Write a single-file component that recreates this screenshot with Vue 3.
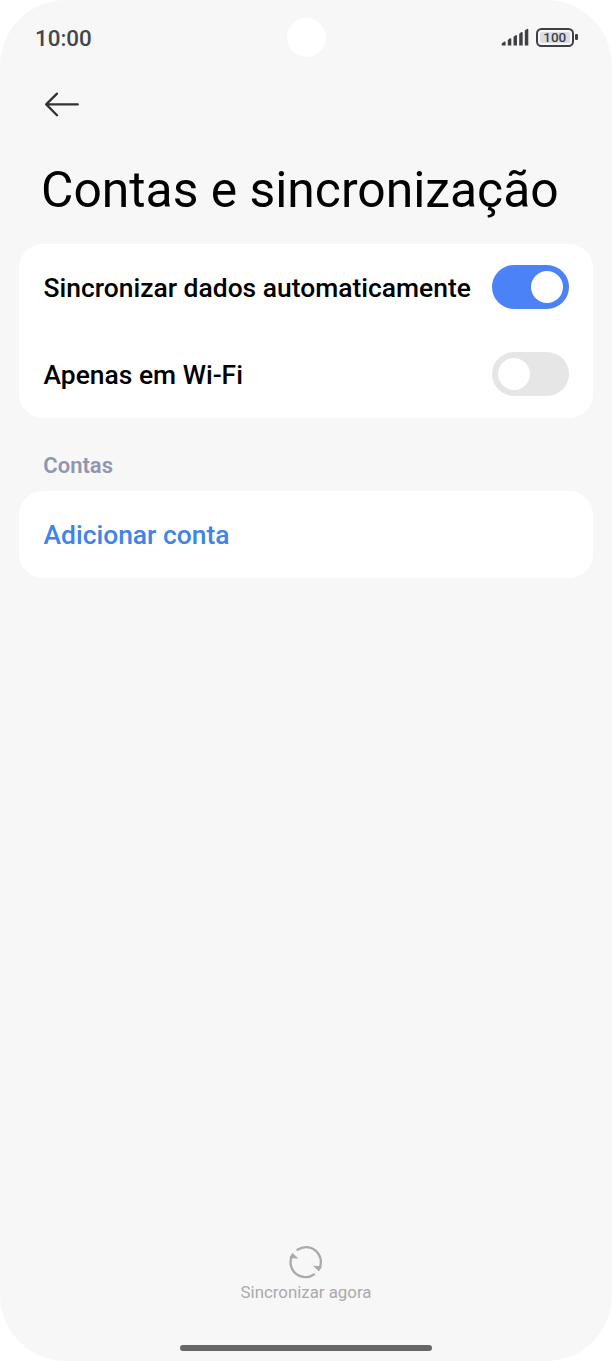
<script setup>
import { ref } from 'vue'

const settings = ref([
  { id: 'auto', label: 'Sincronizar dados automaticamente', on: true },
  { id: 'wifi', label: 'Apenas em Wi-Fi', on: false },
])
</script>

<template>
  <main class="screen">
    <header class="status">
      <span class="time">10:00</span>
      <span class="camera"></span>
      <span class="indicators">
        <svg class="signal" width="28" height="20" viewBox="0 0 28 20">
          <path d="M0.7 18.6V16.6L3.4 14.5Q4.6 14.2 4.6 15.4V18.6ZM6.8 18.6V13L9 11.3Q10.3 10.9 10.3 12.1V18.6ZM12.5 18.6V9.8L14.7 8.2Q16 7.8 16 9V18.6ZM18.2 18.6V6.7L20.4 5.1Q21.7 4.7 21.7 5.9V18.6ZM23.8 18.6V3.5L26 1.9Q27.3 1.5 27.3 2.7V18.6Z" />
        </svg>
        <span class="battery"><span class="level">100</span></span>
        <span class="terminal"></span>
      </span>
    </header>

    <nav class="toolbar">
      <svg width="36" height="26" viewBox="0 0 36 26">
        <path d="M13 2.6L2.2 13.4L13 24.2M2.2 13.4H33.8" />
      </svg>
    </nav>

    <h1>Contas e sincronização</h1>

    <section class="card">
      <div v-for="item in settings" :key="item.id" class="row">
        <span class="label">{{ item.label }}</span>
        <button
          class="switch"
          :class="{ on: item.on }"
          role="switch"
          :aria-checked="item.on"
          :aria-label="item.label"
          @click="item.on = !item.on"
        ><span class="thumb"></span></button>
      </div>
    </section>

    <h2>Contas</h2>
    <section class="card">
      <div class="row add"><span class="label">Adicionar conta</span></div>
    </section>

    <footer class="footer">
      <svg width="34" height="34" viewBox="0 0 34 34">
        <path class="arc" d="M8.5 4.8A14.8 14.8 0 0 1 30.7 22.6M24.9 29.5A14.8 14.8 0 0 1 2.7 11.7" />
        <path class="tip" d="M24.9 21.2L32.4 21.8L29.9 25.8ZM8.5 13.1L1 12.5L3.5 8.5Z" />
      </svg>
      <span class="sync">Sincronizar agora</span>
    </footer>
    <div class="home"></div>
  </main>
</template>

<style>
body {
  background: #fff;
}
</style>

<style scoped>
.screen {
  box-sizing: border-box;
  width: 612px;
  height: 1361px;
  display: flex;
  flex-direction: column;
  background: #f7f7f7;
  border-radius: 66px;
  overflow: hidden;
  font-family: Roboto, sans-serif;
  color: #000;
}
.status {
  height: 74px;
  flex: none;
  display: grid;
  grid-template-columns: 1fr 39px 1fr;
  align-items: center;
  padding: 0 34.5px 0 35px;
  box-sizing: border-box;
}
.time {
  font-size: 22.4px;
  font-weight: 500;
  line-height: 26px;
  padding-top: 2px;
  color: #45464a;
}
.camera {
  width: 39px;
  height: 39px;
  border-radius: 50%;
  background: #fff;
}
.indicators {
  display: flex;
  align-items: center;
  justify-content: flex-end;
}
.signal {
  fill: #3f4043;
  margin-right: 7px;
}
.battery {
  box-sizing: border-box;
  width: 38.5px;
  height: 19px;
  border: 2px solid #3f4043;
  border-radius: 5.5px;
  padding: 2px;
  display: flex;
}
.level {
  flex: 1;
  border-radius: 2px;
  background: #dcdce2;
  color: #3f4043;
  font-size: 13.5px;
  font-weight: 500;
  line-height: 11px;
  text-align: center;
}
.terminal {
  width: 2.5px;
  height: 6px;
  margin-left: 1px;
  border-radius: 1px;
  background: #3f4043;
}
.toolbar {
  height: 82px;
  flex: none;
  padding: 17px 0 0 44px;
  box-sizing: border-box;
}
.toolbar svg {
  display: block;
  fill: none;
  stroke: #333;
  stroke-width: 2.3;
  stroke-linecap: round;
  stroke-linejoin: round;
}
h1 {
  margin: 0;
  height: 88px;
  flex: none;
  padding: 4px 0 0 41px;
  box-sizing: border-box;
  font-size: 49.8px;
  font-weight: 400;
  line-height: 60px;
  white-space: nowrap;
}
.card {
  flex: none;
  margin: 0 19px;
  border-radius: 24px;
  background: #fff;
}
.row {
  box-sizing: border-box;
  height: 87px;
  display: flex;
  align-items: center;
  justify-content: space-between;
  padding: 0 24px 1px 24.5px;
}
.label {
  font-size: 26.43px;
  font-weight: 500;
  line-height: 32px;
  padding-top: 2px;
  white-space: nowrap;
}
.switch {
  box-sizing: border-box;
  width: 77px;
  height: 44px;
  padding: 0 6px;
  margin: 0;
  border: 0;
  border-radius: 22px;
  background: #e6e6e6;
  display: flex;
  align-items: center;
}
.switch.on {
  background: #4c82f7;
  justify-content: flex-end;
}
.thumb {
  width: 32px;
  height: 32px;
  border-radius: 50%;
  background: #fff;
}
h2 {
  margin: 0;
  height: 73px;
  flex: none;
  box-sizing: border-box;
  padding: 35px 0 0 43.3px;
  font-size: 22px;
  font-weight: 600;
  line-height: 26px;
  color: #9195b0;
}
.add {
  color: #4083e9;
}
.footer {
  margin-top: auto;
  display: flex;
  flex-direction: column;
  align-items: center;
}
.footer svg {
  display: block;
}
.arc {
  fill: none;
  stroke: #aaa;
  stroke-width: 2.3;
  stroke-linecap: round;
}
.tip {
  fill: #aaa;
  stroke: #aaa;
  stroke-width: 1;
  stroke-linejoin: round;
}
.sync {
  margin-top: 2px;
  font-size: 16.85px;
  line-height: 22px;
  color: #aaa;
}
.home {
  flex: none;
  width: 252px;
  height: 6px;
  margin: 42px auto 10px;
  border-radius: 3px;
  background: #666;
}
</style>
